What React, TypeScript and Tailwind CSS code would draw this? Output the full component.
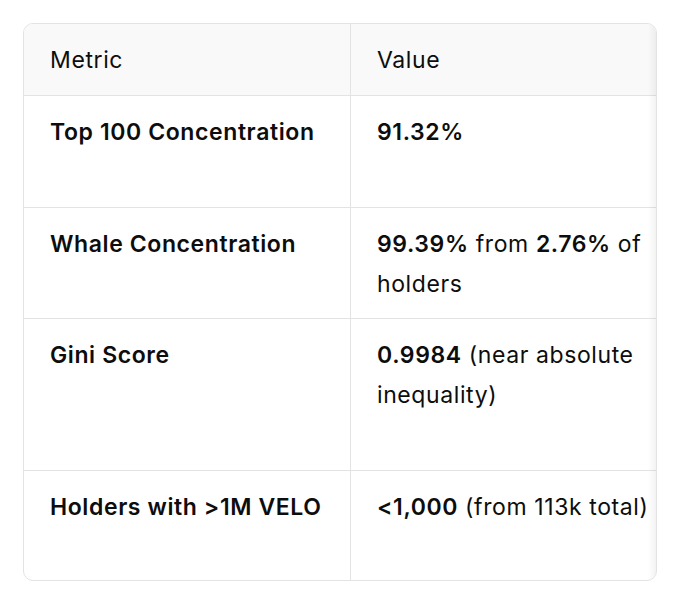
const ROWS = [
  { metric: "Top 100 Concentration", value: <b className="font-semibold">91.32%</b>, h: "h-[112px]" },
  {
    metric: "Whale Concentration",
    value: (
      <>
        <b className="font-semibold">99.39%</b> from <b className="font-semibold">2.76%</b> of holders
      </>
    ),
    h: "h-[111px]",
  },
  {
    metric: "Gini Score",
    value: (
      <>
        <b className="font-semibold">0.9984</b> (near absolute inequality)
      </>
    ),
    h: "h-[152px]",
  },
  {
    metric: "Holders with >1M VELO",
    value: (
      <>
        <b className="font-semibold">&lt;1,000</b> (from 113k total)
      </>
    ),
    h: "h-[109px]",
  },
];

export default function App() {
  return (
    <div
      className="h-[597px] w-[680px] bg-white pl-[23px] pt-[23px] text-[23px] leading-[40px] tracking-[0.6px] text-[#0d0d0d]"
      style={{ fontFamily: "Inter, 'Liberation Sans', sans-serif" }}
    >
      <div className="relative w-[634px] overflow-hidden rounded-[10px] border border-[#e3e3e3]">
        {/* header */}
        <div className="flex h-[72px] border-b border-[#e3e3e3] bg-[#f9f9f9]">
          <div className="w-[327px] shrink-0 border-r border-[#e3e3e3] pl-[26px] pt-4">Metric</div>
          <div className="shrink-0 pl-[26px] pt-4">Value</div>
        </div>

        {ROWS.map((row, i) => (
          <div
            key={row.metric}
            className={`flex ${row.h} ${i < ROWS.length - 1 ? "border-b border-[#e3e3e3]" : ""}`}
          >
            <div className="w-[327px] shrink-0 border-r border-[#e3e3e3] pl-[26px] pt-4 font-semibold">
              {row.metric}
            </div>
            <div className="w-[300px] shrink-0 pl-[26px] pt-4">{row.value}</div>
          </div>
        ))}

        <div className="pointer-events-none absolute inset-y-0 right-0 w-[8px] bg-gradient-to-l from-black/5 to-transparent" />
      </div>
    </div>
  );
}
